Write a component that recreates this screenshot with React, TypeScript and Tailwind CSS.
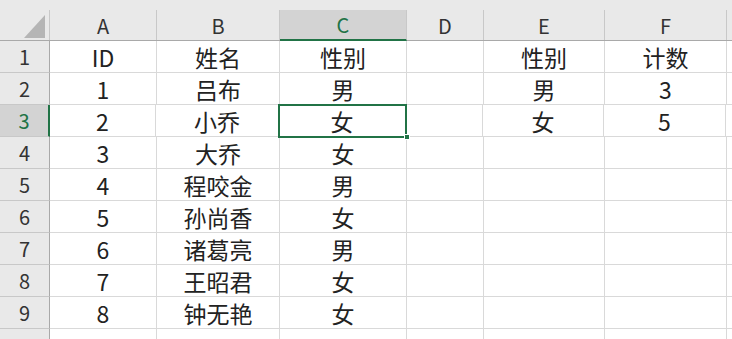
import React from "react";

const cols = [
  { key: "A", w: 107 },
  { key: "B", w: 123 },
  { key: "C", w: 127 },
  { key: "D", w: 77 },
  { key: "E", w: 121 },
  { key: "F", w: 122 },
];

const data: string[][] = [
  ["ID", "姓名", "性别", "", "性别", "计数"],
  ["1", "吕布", "男", "", "男", "3"],
  ["2", "小乔", "女", "", "女", "5"],
  ["3", "大乔", "女", "", "", ""],
  ["4", "程咬金", "男", "", "", ""],
  ["5", "孙尚香", "女", "", "", ""],
  ["6", "诸葛亮", "男", "", "", ""],
  ["7", "王昭君", "女", "", "", ""],
  ["8", "钟无艳", "女", "", "", ""],
  ["", "", "", "", "", ""],
];

const font = {
  fontFamily: '"Noto Sans CJK SC", "Liberation Sans", sans-serif',
};

export default function App() {
  return (
    <div
      className="relative w-[732px] h-[339px] overflow-hidden bg-white text-[#222]"
      style={font}
    >
      {/* top band */}
      <div className="h-[10px] bg-[#e9e9e9]" />
      {/* header row */}
      <div className="flex h-[31px] bg-[#e9e9e9] border-b border-[#a9a9a9]">
        <div className="w-[50px] shrink-0 border-r border-[#c8c8c8] relative">
          <div className="absolute left-[24px] top-[5px] w-0 h-0 border-l-[21px] border-l-transparent border-b-[23px] border-b-[#b5b5b5]" />
        </div>
        {cols.map((c) => {
          const sel = c.key === "C";
          return (
            <div
              key={c.key}
              style={{ width: c.w }}
              className={
                "shrink-0 flex items-end justify-center pb-[1px] text-[20px] leading-[26px] border-r border-[#c8c8c8] " +
                (sel
                  ? "bg-[#d3d3d3] text-[#217346] border-b-2 border-b-[#217346] -mb-[1px]"
                  : "text-[#333]")
              }
            >
              {c.key}
            </div>
          );
        })}
        <div className="flex-1" />
      </div>
      {/* rows */}
      {data.map((row, ri) => {
        const rsel = ri === 2;
        return (
          <div key={ri} className="flex h-[32px]">
            <div
              className={
                "w-[50px] shrink-0 flex items-end justify-center pb-[2px] text-[20px] leading-[26px] border-b border-[#c8c8c8] " +
                (rsel
                  ? "bg-[#d3d3d3] text-[#217346] border-r-2 border-r-[#217346]"
                  : "bg-[#e9e9e9] text-[#333] border-r border-r-[#a9a9a9]")
              }
            >
              {ri < 9 ? ri + 1 : ""}
            </div>
            {cols.map((c, ci) => (
              <div
                key={c.key}
                style={{ width: ci === 0 ? (rsel ? c.w - 1 : c.w) : c.w }}
                className="shrink-0 flex items-end justify-center pb-[1px] text-[23px] leading-[28px] border-r border-b border-[#d9d9d9]"
              >
                {row[ci]}
              </div>
            ))}
            <div className="flex-1 border-b border-[#d9d9d9]" />
          </div>
        );
      })}
      {/* selection box */}
      <div className="absolute left-[278px] top-[104px] w-[129px] h-[34px] border-2 border-[#217346]" />
      <div className="absolute left-[404px] top-[134px] w-[6px] h-[6px] bg-[#217346] border border-white" />
    </div>
  );
}
